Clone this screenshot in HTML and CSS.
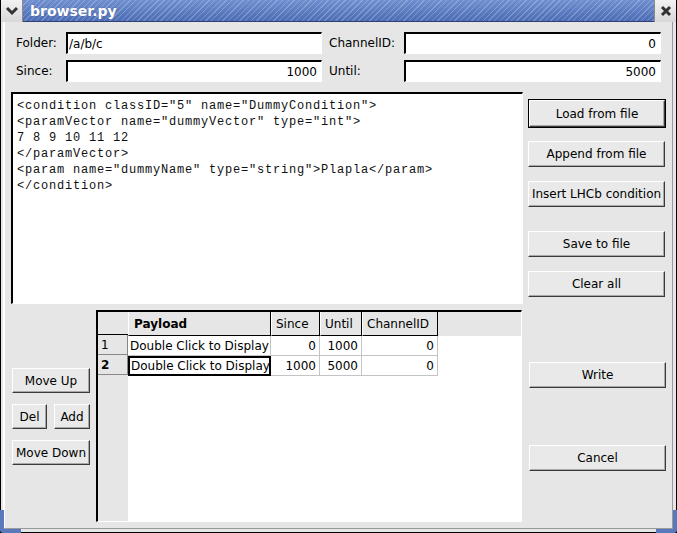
FILE: index.html
```html
<!DOCTYPE html>
<html>
<head>
<meta charset="utf-8">
<link rel="stylesheet" href="styles.css">
</head>
<body>
<div class="window">
  <div class="titlebar">
    <div class="tb-btn menu-btn">
      <svg width="14" height="10" viewBox="0 0 14 10"><path d="M2 2 L7 7 L12 2" fill="none" stroke="#333" stroke-width="3"/></svg>
    </div>
    <div class="title">browser.py</div>
    <div class="tb-btn close-btn">
      <svg width="12" height="12" viewBox="0 0 12 12"><path d="M2 2 L10 10 M10 2 L2 10" stroke="#333" stroke-width="3"/></svg>
    </div>
  </div>
  <div class="content">
    <div class="form">
      <label class="lbl">Folder:</label>
      <div class="entry">/a/b/c</div>
      <label class="lbl lbl2">ChannelID:</label>
      <div class="entry num">0</div>
      <label class="lbl">Since:</label>
      <div class="entry num">1000</div>
      <label class="lbl lbl2">Until:</label>
      <div class="entry num">5000</div>
    </div>
    <div class="upper">
      <pre class="editor">&lt;condition classID="5" name="DummyCondition"&gt;
&lt;paramVector name="dummyVector" type="int"&gt;
7 8 9 10 11 12
&lt;/paramVector&gt;
&lt;param name="dummyName" type="string"&gt;Plapla&lt;/param&gt;
&lt;/condition&gt;</pre>
      <div class="side">
        <div class="default-frame"><button class="btn">Load from file</button></div>
        <button class="btn b-append">Append from file</button>
        <button class="btn b-insert">Insert LHCb condition</button>
        <button class="btn b-save">Save to file</button>
        <button class="btn b-clear">Clear all</button>
      </div>
    </div>
    <div class="lower">
      <div class="rowbtns">
        <button class="btn b-up">Move Up</button>
        <div class="pair">
          <button class="btn b-del">Del</button>
          <button class="btn b-add">Add</button>
        </div>
        <button class="btn b-down">Move Down</button>
      </div>
      <div class="table">
        <div class="vhead">
          <div class="corner"></div>
          <div class="vcell">1</div>
          <div class="vcell cur">2</div>
        </div>
        <div class="grid">
          <div class="hrow">
            <div class="hcell c-pay bold">Payload</div>
            <div class="hcell c-since">Since</div>
            <div class="hcell c-until">Until</div>
            <div class="hcell c-ch">ChannelID</div>
          </div>
          <div class="drow">
            <div class="dcell c-pay">Double Click to Display</div>
            <div class="dcell c-since r">0</div>
            <div class="dcell c-until r">1000</div>
            <div class="dcell c-ch r">0</div>
          </div>
          <div class="drow">
            <div class="dcell c-pay current">Double Click to Display</div>
            <div class="dcell c-since r">1000</div>
            <div class="dcell c-until r">5000</div>
            <div class="dcell c-ch r">0</div>
          </div>
        </div>
      </div>
      <div class="side2">
        <button class="btn b-write">Write</button>
        <button class="btn b-cancel">Cancel</button>
      </div>
    </div>
  </div>
  <div class="corner-bl"></div>
  <div class="corner-br"></div>
</div>
</body>
</html>
```

FILE: styles.css
```css
* { box-sizing: border-box; }
html, body { margin: 0; padding: 0; }
body {
  width: 677px; height: 533px; overflow: hidden;
  background: #e6e6e6;
  font-family: "DejaVu Sans", sans-serif;
  font-size: 12px; color: #000;
}
.window {
  position: relative;
  width: 677px; height: 533px;
  border-left: 1px solid #000;
  border-right: 1px solid #000;
  border-bottom: 1px solid #000;
  background: #e6e6e6;
}
.titlebar {
  height: 22px;
  display: flex; align-items: center;
  background:
    repeating-linear-gradient(135deg, rgba(255,255,255,0.0) 0 3px, rgba(255,255,255,0.22) 3px 4px),
    linear-gradient(#6f8fd0, #4c6cb4);
  border-bottom: 1px solid #2d3f73;
}
.tb-btn {
  width: 22px; height: 22px;
  background: linear-gradient(#f2f2f2, #d8d8d8);
  display: flex; align-items: center; justify-content: center;
  border-right: 1px solid #8a8a8a;
}
.close-btn { margin-left: auto; border-right: none; border-left: 1px solid #8a8a8a; }
.title {
  color: #fff; font-weight: bold; font-size: 14px;
  padding-left: 7px;
  text-shadow: 0 0 1px rgba(0,0,0,0.3);
}
.content {
  border-left: 2px solid #fff;
  margin-left: 2px; margin-right: 3px;
  border-right: 1px solid #9a9a9a;
  border-bottom: 1px solid #9a9a9a;
  height: 507px;
  padding-top: 10px;
}
.form {
  display: grid;
  grid-template-columns: 50px 256px 82px 257px;
  grid-template-rows: 22px 22px;
  row-gap: 6px;
  padding-left: 11px;
}
.lbl { display: flex; align-items: center; padding-left: 0; }
.lbl2 { padding-left: 7px; }
.entry {
  background: #fff;
  border-top: 2px solid #000;
  border-left: 2px solid #000;
  border-right: 1px solid #fff;
  border-bottom: 1px solid #fff;
  display: flex; align-items: center;
  padding: 1px 4px 0 1px;
  font-size: 12px;
}
.entry.num { justify-content: flex-end; }
.upper {
  display: flex;
  margin-top: 10px;
  padding-left: 6px;
}
.editor {
  margin: 0;
  width: 512px; height: 212px;
  background: #fff;
  border-top: 2px solid #000;
  border-left: 2px solid #000;
  border-right: 1px solid #fff;
  border-bottom: 1px solid #fff;
  font-family: "Liberation Mono", monospace;
  font-size: 12px; line-height: 16px; letter-spacing: 0.8px;
  padding: 4px 4px;
  color: #111;
}
.btn {
  font-family: "DejaVu Sans", sans-serif;
  font-size: 12px; color: #000;
  background: #e9e9e9;
  border: 1px solid;
  border-color: #fff #3a3a3a #3a3a3a #fff;
  box-shadow: inset -1px -1px 0 #a8a8a8;
  padding: 0;
  display: flex; align-items: center; justify-content: center;
}
.side { margin-left: 5px; display: flex; flex-direction: column; width: 138px; }
.side .btn { width: 137px; height: 26px; }
.default-frame {
  margin-top: 7px;
  border: 1px solid #000;
  width: 138px; height: 29px;
  padding: 0 0 1px 0;
}
.default-frame .btn { width: 136px; height: 27px; }
.b-append { margin-top: 13px; }
.b-insert { margin-top: 14px; }
.b-save { margin-top: 24px; }
.b-clear { margin-top: 14px; }
.lower { display: flex; margin-top: 6px; }
.rowbtns { width: 91px; padding-left: 7px; padding-top: 58px; display: flex; flex-direction: column; }
.rowbtns .btn { height: 25px; }
.b-up { width: 78px; }
.pair { display: flex; margin-top: 11px; }
.b-del { width: 35px; }
.b-add { width: 36px; margin-left: 7px; }
.b-down { width: 78px; margin-top: 11px; }
.table {
  width: 426px; height: 212px;
  display: flex;
  background: #fff;
  border-top: 2px solid #000;
  border-left: 2px solid #000;
  border-right: 1px solid #fff;
  border-bottom: 1px solid #fff;
  overflow: hidden;
}
.vhead { width: 30px; background: #e6e6e6; display: flex; flex-direction: column; }
.corner { height: 23px; border-bottom: 1px solid #000; }
.vcell {
  height: 20px; padding-left: 3px; display: flex; align-items: center;
  border-right: 1px solid #888; border-bottom: 1px solid #888;
}
.vcell.cur { font-weight: bold; }
.grid { flex: 1; display: flex; flex-direction: column; }
.hrow { display: flex; height: 24px; background: #e6e6e6; }
.hcell {
  display: flex; align-items: center; padding-left: 4px;
  border-right: 1px solid #000; border-bottom: 1px solid #000;
  border-left: 1px solid #fff;
  font-size: 12px;
}
.bold { font-weight: bold; padding-left: 5px; }
.c-pay { width: 143px; }
.c-since { width: 49px; }
.c-until { width: 42px; }
.c-ch { width: 76px; }
.drow { display: flex; height: 20px; }
.dcell {
  display: flex; align-items: center; padding: 0 3px 0 2px;
  border-right: 1px solid #c4c4c4; border-bottom: 1px solid #c4c4c4;
  white-space: nowrap;
}
.dcell.r { justify-content: flex-end; }
.dcell.current { border: 2px solid #000; padding-left: 1px; }
.side2 { margin-left: 7px; padding-top: 52px; display: flex; flex-direction: column; }
.side2 .btn { width: 137px; height: 26px; }
.b-cancel { margin-top: 57px; }
.corner-bl {
  position: absolute; left: -1px; bottom: -1px; width: 21px; height: 23px;
  border-left: 4px solid #5a79bd; border-bottom: 4px solid #5a79bd;
  border-bottom-left-radius: 4px;
}
.corner-br {
  position: absolute; right: -1px; bottom: -1px; width: 21px; height: 23px;
  border-right: 4px solid #5a79bd; border-bottom: 4px solid #5a79bd;
  border-bottom-right-radius: 4px;
}
```
